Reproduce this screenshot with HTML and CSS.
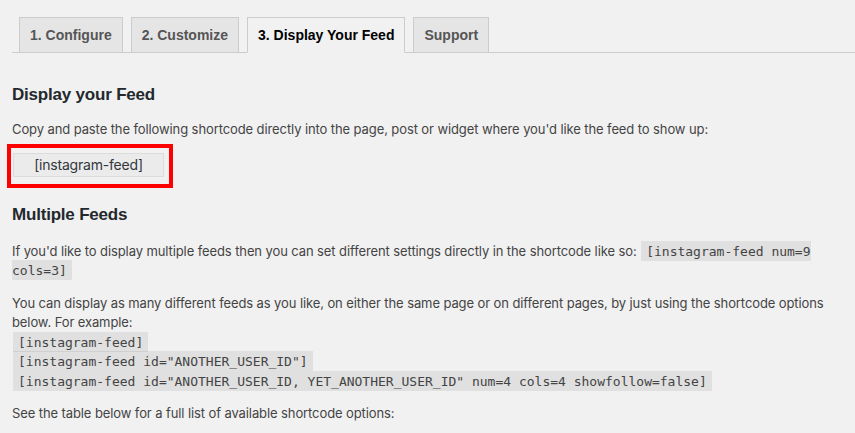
FILE: index.html
```html
<!DOCTYPE html>
<html>
<head>
<meta charset="utf-8">
<link rel="stylesheet" href="styles.css">
</head>
<body>
<div class="wrap">
  <nav class="tabs">
    <a class="tab">1. Configure</a>
    <a class="tab">2. Customize</a>
    <a class="tab tab-active">3. Display Your Feed</a>
    <a class="tab">Support</a>
  </nav>
  <div class="content">
    <h2 class="title first">Display your Feed</h2>
    <p class="text">Copy and paste the following shortcode directly into the page, post or widget where you'd like the feed to show up:</p>
    <div class="shortcode-row">
      <div class="shortcode-holder">
        <input class="shortcode" type="text" readonly value="[instagram-feed]">
        <span class="highlight"></span>
      </div>
    </div>
    <h2 class="title">Multiple Feeds</h2>
    <p class="text">If you'd like to display multiple feeds then you can set different settings directly in the shortcode like so: <code class="code">[instagram-feed num=9 cols=3]</code></p>
    <p class="text">You can display as many different feeds as you like, on either the same page or on different pages, by just using the shortcode options below. For example:<br>
    <code class="code">[instagram-feed]</code><br>
    <code class="code">[instagram-feed id="ANOTHER_USER_ID"]</code><br>
    <code class="code">[instagram-feed id="ANOTHER_USER_ID, YET_ANOTHER_USER_ID" num=4 cols=4 showfollow=false]</code></p>
    <p class="text">See the table below for a full list of available shortcode options:</p>
  </div>
</div>
</body>
</html>
```
FILE: styles.css
```css
html, body {
  margin: 0;
  padding: 0;
  background: #f1f1f1;
}
body {
  font-family: Inter, "Liberation Sans", Arial, sans-serif;
  font-size: 13px;
  letter-spacing: -0.1px;
  color: #444;
}
.wrap {
  padding-left: 12px;
  overflow: hidden;
}
.tabs {
  display: flex;
  gap: 8px;
  margin-top: 17px;
  padding-left: 7px;
  border-bottom: 1px solid #ccc;
}
.tab {
  display: block;
  padding: 5px 10px;
  line-height: 24px;
  font-family: "Liberation Sans", Arial, sans-serif;
  font-size: 14px;
  font-weight: bold;
  letter-spacing: 0;
  color: #555;
  background: #e5e5e5;
  border: 1px solid #ccc;
  margin-bottom: -1px;
}
.tab-active {
  background: #f1f1f1;
  color: #000;
  border-bottom-color: #f1f1f1;
}
.content {
  padding-right: 20px;
}
.title {
  font-family: "Liberation Sans", Arial, sans-serif;
  font-size: 17px;
  letter-spacing: -0.2px;
  font-weight: bold;
  color: #23282d;
  line-height: 22px;
  margin: 27px 0 16px;
}
.title.first {
  margin-top: 31px;
  margin-bottom: 14px;
}
.text {
  line-height: 19.5px;
  margin: 13px 0;
}
.shortcode-row {
  margin-top: 13px;
  padding-left: 1px;
}
.shortcode-holder {
  position: relative;
  display: inline-block;
  vertical-align: top;
}
.shortcode {
  display: block;
  box-sizing: border-box;
  width: 151px;
  height: 24px;
  margin: 0;
  padding: 0 4px;
  border: 1px solid #dcdcdc;
  background: #ebebeb;
  color: #32373c;
  font-family: Inter, "Liberation Sans", Arial, sans-serif;
  font-size: 14px;
  letter-spacing: -0.2px;
  text-align: center;
  outline: none;
}
.highlight {
  position: absolute;
  left: -6px;
  top: -9px;
  right: -9px;
  bottom: -11px;
  border: 4px solid #f00;
}
.code {
  font-family: "DejaVu Sans Mono", Menlo, monospace;
  font-size: 13px;
  letter-spacing: 0;
  padding: 3px 5px 2px;
  margin: 0 1px;
  background: rgba(0, 0, 0, 0.07);
  color: #444;
}
```
